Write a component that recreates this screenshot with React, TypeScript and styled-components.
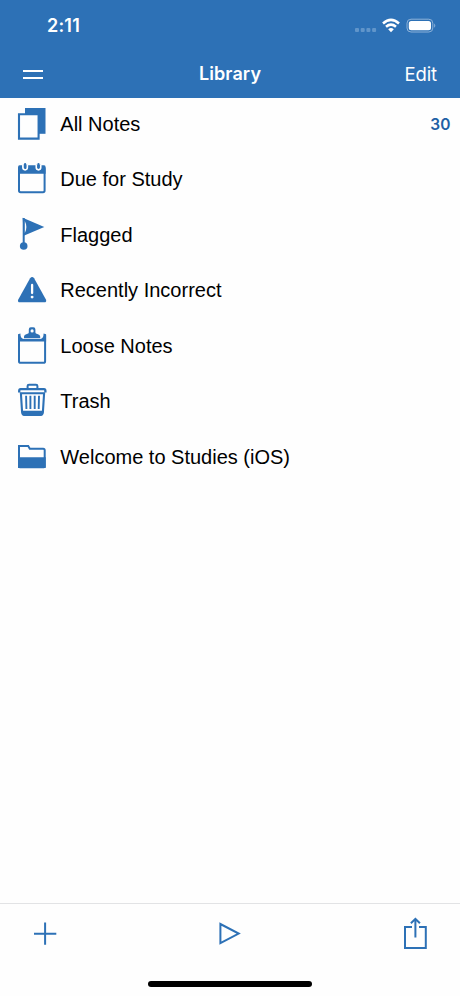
import React from 'react';
import styled, { createGlobalStyle } from 'styled-components';

const BLUE = '#2d71b6';

const GlobalStyle = createGlobalStyle`
  * { box-sizing: border-box; }
  body { margin: 0; background: #fff; }
`;

const Screen = styled.div`
  display: flex;
  flex-direction: column;
  width: 460px;
  height: 996px;
  overflow: hidden;
  background: #fefefe;
  color: #000;
  font-family: 'Liberation Sans', Arial, sans-serif;
`;

const Header = styled.header`
  flex: none;
  height: 98px;
  background: ${BLUE};
  color: #fff;
  font-family: Inter, sans-serif;
`;

const StatusBar = styled.div`
  display: flex;
  justify-content: space-between;
  align-items: center;
  height: 50px;
  padding: 1px 23px 0 47px;
`;

const Time = styled.span`
  font-size: 18px;
  font-weight: 600;
  letter-spacing: 0.2px;
`;

const StatusIcons = styled.svg`
  display: block;
  width: 82px;
  height: 20px;
`;

const NavBar = styled.nav`
  display: grid;
  grid-template-columns: 1fr auto 1fr;
  align-items: center;
  height: 48px;
  padding: 0 23px;
`;

const MenuButton = styled.button`
  display: flex;
  flex-direction: column;
  gap: 5px;
  width: 20px;
  padding: 0;
  border: 0;
  background: none;
`;

const MenuLine = styled.span`
  height: 2px;
  background: #fff;
`;

const Title = styled.h1`
  margin: 0;
  font-size: 18px;
  line-height: 24px;
  font-weight: 600;
  letter-spacing: 0.1px;
`;

const EditButton = styled.button`
  justify-self: end;
  padding: 0;
  border: 0;
  background: none;
  color: #fff;
  font: 400 18.5px/24px Inter, sans-serif;
  letter-spacing: -0.1px;
`;

const List = styled.ul`
  flex: 1;
  margin: -1.8px 0 0;
  padding: 0;
  list-style: none;
`;

const Row = styled.li`
  display: flex;
  align-items: center;
  height: 55.5px;
  padding: 0 9.5px 0 16px;
`;

const RowIcon = styled.svg`
  flex: none;
  width: 32px;
  height: 36px;
  margin-right: 12.3px;
  overflow: visible;
`;

const Label = styled.span`
  flex: 1;
  font-size: 20px;
  line-height: 24px;
`;

const Count = styled.span`
  margin-top: 3px;
  color: #1e60a5;
  font: 600 15.5px/20px Inter, sans-serif;
  letter-spacing: 0.1px;
`;

const Toolbar = styled.footer`
  display: flex;
  flex-direction: column;
  align-items: center;
  flex: none;
  height: 93px;
  border-top: 1px solid #e2e3e5;
`;

const Actions = styled.div`
  display: flex;
  justify-content: space-between;
  align-items: center;
  width: 100%;
  height: 59px;
  padding: 0 29px;
`;

const ActionButton = styled.button`
  padding: 0;
  border: 0;
  background: none;
`;

const ActionIcon = styled.svg`
  display: block;
  width: 32px;
  height: 36px;
`;

const HomeIndicator = styled.div`
  width: 164px;
  height: 6px;
  margin-top: 18px;
  border-radius: 3px;
  background: #000;
`;

const icons = {
  notes: (
    <>
      <path d="M9 2h20.5v25.8H9z" fill={BLUE} />
      <path d="M3 8.2h19.6v24.4H3z" fill="#fefefe" stroke={BLUE} strokeWidth="2.1" />
    </>
  ),
  calendar: (
    <>
      <rect x="3" y="6.2" width="25.6" height="25" rx="1.6" fill="#fefefe" stroke={BLUE} strokeWidth="2" />
      <path d="M2 6.5Q2 4.2 3.5 4.2h24.7q1.4 0 1.4 2.3v6.3H2z" fill={BLUE} />
      <path d="M6.9 3.8v2.8q0 2.2 2.2 2.2t2.2-2.2V3.8M20.3 3.8v2.8q0 2.2 2.2 2.2t2.2-2.2V3.8" fill={BLUE} stroke="#fefefe" strokeWidth="1.7" />
      <path d="M9.1 3v3.2M22.5 3v3.2" stroke={BLUE} strokeWidth="2.2" strokeLinecap="round" />
    </>
  ),
  flag: (
    <>
      <path d="M7.7 1v28" stroke={BLUE} strokeWidth="2" />
      <path d="M6.7.8L28.3 10 7.7 18.7z" fill={BLUE} />
      <path d="M8.8 3.9Q12 10 8.8 15.9z" fill="#fefefe" />
      <circle cx="7.7" cy="29" r="3.8" fill={BLUE} />
    </>
  ),
  warning: (
    <>
      <path d="M14.1 6.2q2-2.5 4 0l11.8 21.2q1.2 2.8-1.7 2.8H4Q1 30.2 2.3 27.4z" fill={BLUE} />
      <path d="M16.1 13v8" stroke="#fefefe" strokeWidth="2.3" strokeLinecap="round" />
      <circle cx="16.1" cy="25.1" r="1.45" fill="#fefefe" />
    </>
  ),
  clipboard: (
    <>
      <path d="M3 7.2v26q0 1.6 1.7 1.6h22.7q1.7 0 1.7-1.6v-26" fill="none" stroke={BLUE} strokeWidth="2" />
      <path d="M2 6.2l2.4-.6q0 5 3.4 5.5h16.4q3.4-.5 3.4-5.5l2.5.6v7.3H2z" fill={BLUE} />
      <path d="M8 10.2V8.6q0-2 2.8-2.5 2-.4 2-1.6V1.4q0-2.2 2-2.2h2.6q2 0 2 2.2v3.1q0 1.2 2 1.6 2.8.5 2.8 2.5v1.6z" fill={BLUE} />
      <circle cx="16.1" cy="2.9" r="1.6" fill="#fefefe" />
    </>
  ),
  trash: (
    <>
      <path d="M11.6 6V3q0-1.3 1.4-1.3h7q1.4 0 1.4 1.3v3" fill="none" stroke={BLUE} strokeWidth="2" />
      <path d="M3.2 9.4V8q0-1.8 1.4-1.8H28q1.4 0 1.4 1.8v1.4" fill="none" stroke={BLUE} strokeWidth="2.3" />
      <path d="M4.9 10.3h23.2l-1.2 18.8q-.2 2.7-2.4 2.7H8.5q-2.2 0-2.4-2.7z" fill="none" stroke={BLUE} strokeWidth="2.1" />
      <path d="M5.6 27.7h21.8l-.4 2.8q-.3 2.4-2.5 2.4H8.5q-2.2 0-2.5-2.4z" fill={BLUE} />
      <path d="M10.1 12.7l.3 13.3M14.4 12.7V26M18.7 12.7V26M23 12.7L22.7 26" stroke={BLUE} strokeWidth="1.9" />
    </>
  ),
  folder: (
    <>
      <path d="M3 28V7.1h9.2l1.6 2.7h13.4q1.5 0 1.5 1.5V28z" fill="#fefefe" stroke={BLUE} strokeWidth="2" />
      <path d="M2 18.3h27.7v9.2q0 1.8-1.8 1.8H3.8q-1.8 0-1.8-1.8z" fill={BLUE} />
    </>
  ),
};

const items: { label: string; icon: keyof typeof icons; count?: number }[] = [
  { label: 'All Notes', icon: 'notes', count: 30 },
  { label: 'Due for Study', icon: 'calendar' },
  { label: 'Flagged', icon: 'flag' },
  { label: 'Recently Incorrect', icon: 'warning' },
  { label: 'Loose Notes', icon: 'clipboard' },
  { label: 'Trash', icon: 'trash' },
  { label: 'Welcome to Studies (iOS)', icon: 'folder' },
];

export default function App() {
  return (
    <>
      <GlobalStyle />
      <Screen>
        <Header>
          <StatusBar>
            <Time>2:11</Time>
            <StatusIcons viewBox="0 0 82 20">
              <g fill="#6095ca">
                <rect x="0" y="12" width="4" height="4" rx="1" />
                <rect x="5.7" y="12" width="4" height="4" rx="1" />
                <rect x="11.4" y="12" width="4" height="4" rx="1" />
                <rect x="17.1" y="12" width="4" height="4" rx="1" />
              </g>
              <g fill="none" stroke="#fff" strokeWidth="2.6">
                <path d="M28 7.4q8-7 16 0" />
                <path d="M31 10.7q5-4.2 10 0" />
              </g>
              <path d="M33.2 13.2q2.8-2.3 5.6 0L36 16.2z" fill="#fff" />
              <rect x="52" y="3.2" width="25.8" height="12.8" rx="4" fill="none" stroke="#8db2d9" />
              <rect x="53.8" y="4.9" width="22.2" height="9.4" rx="2.5" fill="#fff" />
              <path d="M79.2 7.4q2.2 2.1 0 4.4z" fill="#8db2d9" />
            </StatusIcons>
          </StatusBar>
          <NavBar>
            <MenuButton aria-label="Menu">
              <MenuLine />
              <MenuLine />
            </MenuButton>
            <Title>Library</Title>
            <EditButton>Edit</EditButton>
          </NavBar>
        </Header>
        <List>
          {items.map(({ label, icon, count }) => (
            <Row key={label}>
              <RowIcon viewBox="0 0 32 36" aria-hidden="true">{icons[icon]}</RowIcon>
              <Label>{label}</Label>
              {count !== undefined && <Count>{count}</Count>}
            </Row>
          ))}
        </List>
        <Toolbar>
          <Actions>
            <ActionButton aria-label="Add">
              <ActionIcon viewBox="0 0 32 36" fill="none" stroke={BLUE} strokeWidth="2">
                <path d="M5 17.7h22.3M16.1 6.4v22.4" />
              </ActionIcon>
            </ActionButton>
            <ActionButton aria-label="Study">
              <ActionIcon viewBox="0 0 32 36" fill="none" stroke={BLUE} strokeWidth="2">
                <path d="M6.4 8v19.2L24.7 17.6z" />
              </ActionIcon>
            </ActionButton>
            <ActionButton aria-label="Share">
              <ActionIcon viewBox="0 0 32 36" fill="none" stroke={BLUE} strokeWidth="2">
                <path d="M13 11H6v21.1h20.8V11H20" />
                <path d="M16.4 21.5V3M11.9 7.3l4.5-4.5 4.5 4.5" />
              </ActionIcon>
            </ActionButton>
          </Actions>
          <HomeIndicator />
        </Toolbar>
      </Screen>
    </>
  );
}
